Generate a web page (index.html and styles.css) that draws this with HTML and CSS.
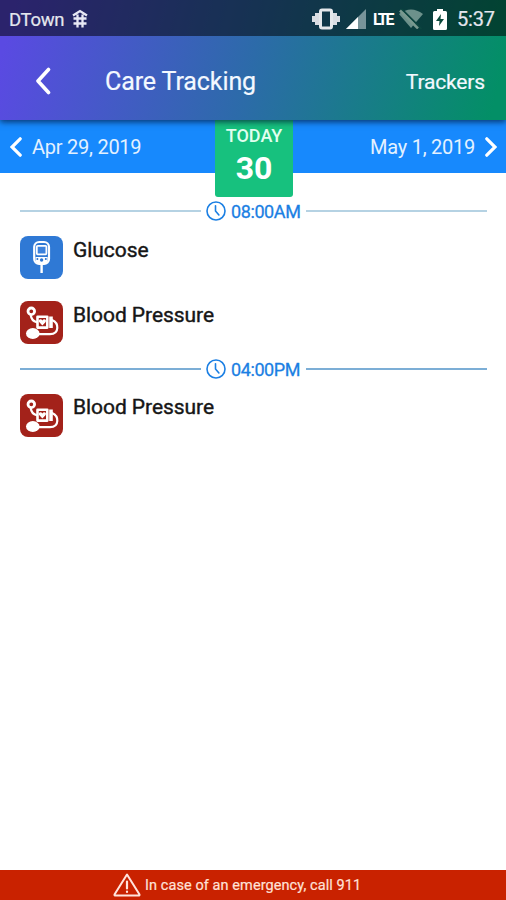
FILE: index.html
```html
<!DOCTYPE html>
<html lang="en">
<head>
<meta charset="utf-8">
<title>Care Tracking</title>
<link rel="stylesheet" href="styles.css">
</head>
<body>
<svg class="defs" aria-hidden="true">
  <symbol id="clock" viewBox="0 0 20 20"><g fill="none" stroke="currentColor" stroke-width="1.6" stroke-linecap="round"><circle cx="10" cy="10" r="9"/><path d="M9.500 4.800V10l3.400 4"/></g></symbol>
  <symbol id="pressure" viewBox="0 0 43 43">
    <g fill="none" stroke="#fff" stroke-width="2.200" stroke-linecap="round" stroke-linejoin="round">
      <circle cx="11.300" cy="10.300" r="3.300" stroke-width="2.800"/>
      <path d="M10.800 14.500c.4 3.200 2.400 5.700 6 6.700"/>
      <path d="M32 19c3.600 1.500 5.500 4.600 5.300 8-.2 4.200-3.300 6.200-7.300 6.200H18"/>
      <path d="M17.500 15.800h9.800v10.800h-9.800z" stroke-width="2.600"/>
      <path d="M31 15.500v11.500" stroke-width="3.600" stroke-linecap="butt"/>
    </g>
    <path d="M22.400 24.500l-3.300-3.500c-1.300-2.600 2-3.600 3.300-1.600 1.300-2 4.600-1 3.300 1.600z" fill="#fff"/>
    <ellipse cx="12.800" cy="32.500" rx="6.800" ry="5.400" fill="#fff"/>
  </symbol>
</svg>
<div class="top">
  <div class="status">
    <span class="carrier">DTown</span>
    <svg class="hash" viewBox="0 0 16 20" fill="none" stroke="#e8e9f5" stroke-width="2.300"><path d="M1 6.500L8 2l7 4.500M5.500 5.500V18.500M10.500 5.500V18.500M1.500 9.500h13M1.500 14.500h13"/></svg>
    <span class="space"></span>
    <svg class="vibrate" viewBox="0 0 28 22"><path d="M0 8h3V5h4v12H3v-3H0zM28 8h-3V5h-4v12h4v-3h3z" fill="#d9dde3"/><rect x="8.500" y="2" width="11" height="18" rx="1.500" fill="none" stroke="#e5e8ec" stroke-width="3"/></svg>
    <svg class="signal" viewBox="0 0 20 20"><path d="M0 20L20 0v20z" fill="#78949a"/><path d="M0 20L12 8v12z" fill="#fff"/></svg>
    <span class="lte">LTE</span>
    <svg class="wifi" viewBox="0 0 24 20"><path d="M0 5Q12-4 24 5L12 19z" fill="#6c918b"/><path d="M2.500 0l20 20" stroke="#0b443f" stroke-width="2"/><path d="M1 1.500l18 18" stroke="#78998f" stroke-width="2.500"/></svg>
    <svg class="battery" viewBox="0 0 14 21"><path d="M4 0h6v2h2.500Q14 2 14 3.500v16q0 1.500-1.500 1.500h-11Q0 21 0 19.500v-16Q0 2 1.500 2H4z" fill="#fff"/><path d="M8 5l-5 7h3.500L6 17l5-7H7.500z" fill="#0a493b"/></svg>
    <span class="time">5:37</span>
  </div>
  <header class="header">
    <svg class="back" viewBox="0 0 16 28"><path d="M13.500 2.500L3 14l10.500 11.500" fill="none" stroke="#fff" stroke-width="3.600" stroke-linecap="round" stroke-linejoin="round"/></svg>
    <h1>Care Tracking</h1>
    <span class="trackers">Trackers</span>
  </header>
</div>
<nav class="dates">
  <div class="date"><svg class="arrow" viewBox="0 0 12 20"><path d="M10.200 1.800L2 10l8.200 8.200" fill="none" stroke="#fff" stroke-width="3.200" stroke-linecap="round"/></svg><span>Apr 29, 2019</span></div>
  <div class="today"><span class="label">TODAY</span><strong>30</strong></div>
  <div class="date next"><span>May 1, 2019</span><svg class="arrow" viewBox="0 0 12 20"><path d="M1.800 1.800L10 10l-8.200 8.200" fill="none" stroke="#fff" stroke-width="3.200" stroke-linecap="round"/></svg></div>
</nav>
<main>
  <div class="slot first"><i class="rule"></i><svg><use href="#clock"/></svg><span>08:00AM</span><i class="rule"></i></div>
  <div class="item glucose">
    <svg class="tile blue" viewBox="0 0 43 43"><rect x="14.200" y="6" width="14.800" height="22" rx="5" fill="none" stroke="#fff" stroke-width="2.200"/><rect x="16.800" y="9.800" width="9.600" height="8.500" rx="1" fill="#3c82dc" stroke="#fff" stroke-width="1.800"/><path d="M15.500 21h12.200v4.500q-1 2.500-4 3h-4q-3-.5-4.200-3z" fill="#fff"/><circle cx="21.600" cy="24" r="1.700" fill="#2c75d0"/><circle cx="17.400" cy="23" r="1" fill="#2c75d0"/><circle cx="25.800" cy="23" r="1" fill="#2c75d0"/><path d="M21.600 28v9" stroke="#fff" stroke-width="2.400"/></svg>
    <span>Glucose</span>
  </div>
  <div class="item"><svg class="tile red"><use href="#pressure"/></svg><span>Blood Pressure</span></div>
  <div class="slot second"><i class="rule"></i><svg><use href="#clock"/></svg><span>04:00PM</span><i class="rule"></i></div>
  <div class="item last"><svg class="tile red"><use href="#pressure"/></svg><span>Blood Pressure</span></div>
</main>
<footer>
  <svg viewBox="0 0 28 24" fill="none" stroke="#ffe3dc" stroke-width="2" stroke-linejoin="round" stroke-linecap="round"><path d="M14 1.500L1.500 21.500q-.3 1 1 1h23q1.300 0 1-1z"/><path d="M14 8.500v7M14 18.500v.5" stroke-width="2.200"/></svg>
  <span>In case of an emergency, call 911</span>
</footer>
</body>
</html>
```
FILE: styles.css
```css
* { box-sizing: border-box; }
body {
  margin: 0;
  width: 506px;
  height: 900px;
  display: flex;
  flex-direction: column;
  background: #fff;
  font-family: Roboto, sans-serif;
  overflow: hidden;
}
svg { flex: none; display: block; }
.defs { position: absolute; width: 0; height: 0; }
.top {
  position: relative;
  z-index: 2;
  height: 120px;
  flex: none;
  background: linear-gradient(105deg, #5a4ae2 3%, #2c6ba9 50%, #038f66 97%);
  box-shadow: 0 2px 6px rgba(0, 20, 50, .7);
}
.status {
  height: 36px;
  display: flex;
  align-items: center;
  padding: 2px 11px 0 9px;
  background: rgba(0, 0, 0, .52);
  color: #e4e6ee;
}
.carrier { width: 57px; font-size: 18.5px; letter-spacing: -.3px; margin-top: 1px; -webkit-text-stroke: .2px currentColor; }
.hash { width: 16px; height: 20px; margin-left: 6px; }
.space { flex: 1; }
.vibrate { width: 28px; height: 22px; }
.signal { width: 20px; height: 20px; margin-left: 6px; }
.lte { width: 20px; margin-left: 7px; font: 700 16px Roboto, sans-serif; letter-spacing: -2.2px; color: #fff; }
.wifi { width: 24px; height: 20px; margin-left: 6px; }
.battery { width: 14px; height: 21px; margin-left: 10px; }
.time { width: 38px; margin-left: 10px; font-size: 20px; letter-spacing: -.2px; white-space: nowrap; -webkit-text-stroke: .2px currentColor; }
.header {
  height: 84px;
  display: flex;
  align-items: center;
  padding: 7px 21px 0 35px;
  color: #f3f8ff;
}
.back { width: 16px; height: 28px; margin-top: -2px; }
h1 { margin: 0 auto 0 54px; font-size: 25px; font-weight: 400; letter-spacing: -.1px; line-height: 30px; -webkit-text-stroke: .2px currentColor; }
.trackers { font-size: 21px; letter-spacing: -.15px; margin-top: 1px; -webkit-text-stroke: .2px currentColor; }
.dates {
  flex: none;
  height: 53px;
  display: flex;
  align-items: flex-start;
  background: #1789fd;
  color: #e3f1ff;
}
.date { width: 215px; height: 53px; display: flex; align-items: center; padding-left: 10px; font-size: 20px; letter-spacing: -.25px; }
.date.next { width: 213px; justify-content: flex-end; padding: 0 9px 0 0; }
.arrow { width: 12px; height: 20px; }
.date .arrow + span { margin-left: 10px; }
.date span + .arrow { margin-left: 10px; }
.today {
  width: 78px;
  height: 77px;
  display: flex;
  flex-direction: column;
  align-items: center;
  padding-top: 5px;
  border-radius: 0 0 3px 3px;
  background: #17c17e;
  color: #fff;
}
.label { font-size: 18px; font-weight: 500; line-height: 22px; color: #e2fff0; }
.today strong { font-size: 32px; line-height: 40px; margin-top: 1px; }
main { flex: 1; padding: 26px 19px 0 20px; }
.slot { height: 24px; display: flex; align-items: center; color: #1b7fe3; font-size: 18px; }
.slot svg { width: 20px; height: 20px; margin-left: 5px; }
.slot span { width: 70px; margin: 0 5px; letter-spacing: -.4px; -webkit-text-stroke: .3px currentColor; }
.rule { flex: 1; height: 2px; background: #b5d2e3; }
.second .rule { background: #7caed6; }
.item { height: 43px; display: flex; margin-bottom: 22px; color: #161616; font-size: 21px; font-weight: 400; letter-spacing: -.06px; line-height: 24px; -webkit-text-stroke: .4px currentColor; }
.item span { margin: 2px 0 0 10px; }
.glucose { margin-top: 13px; }
.slot.second { margin-top: -9px; margin-bottom: 13px; }
.item.last span { margin-top: 1px; }
.tile { width: 43px; height: 43px; border-radius: 8px; -webkit-text-stroke: 0; }
.blue { background: #2f79d5; }
.red { background: #a3221a; }
footer {
  flex: none;
  height: 30px;
  display: flex;
  align-items: center;
  padding-left: 113px;
  background: #c92200;
  color: #ffe1d8;
  font-size: 14.5px;
}
footer svg { width: 28px; height: 24px; }
footer span { margin-left: 4px; letter-spacing: .08px; -webkit-text-stroke: .2px currentColor; }
```
